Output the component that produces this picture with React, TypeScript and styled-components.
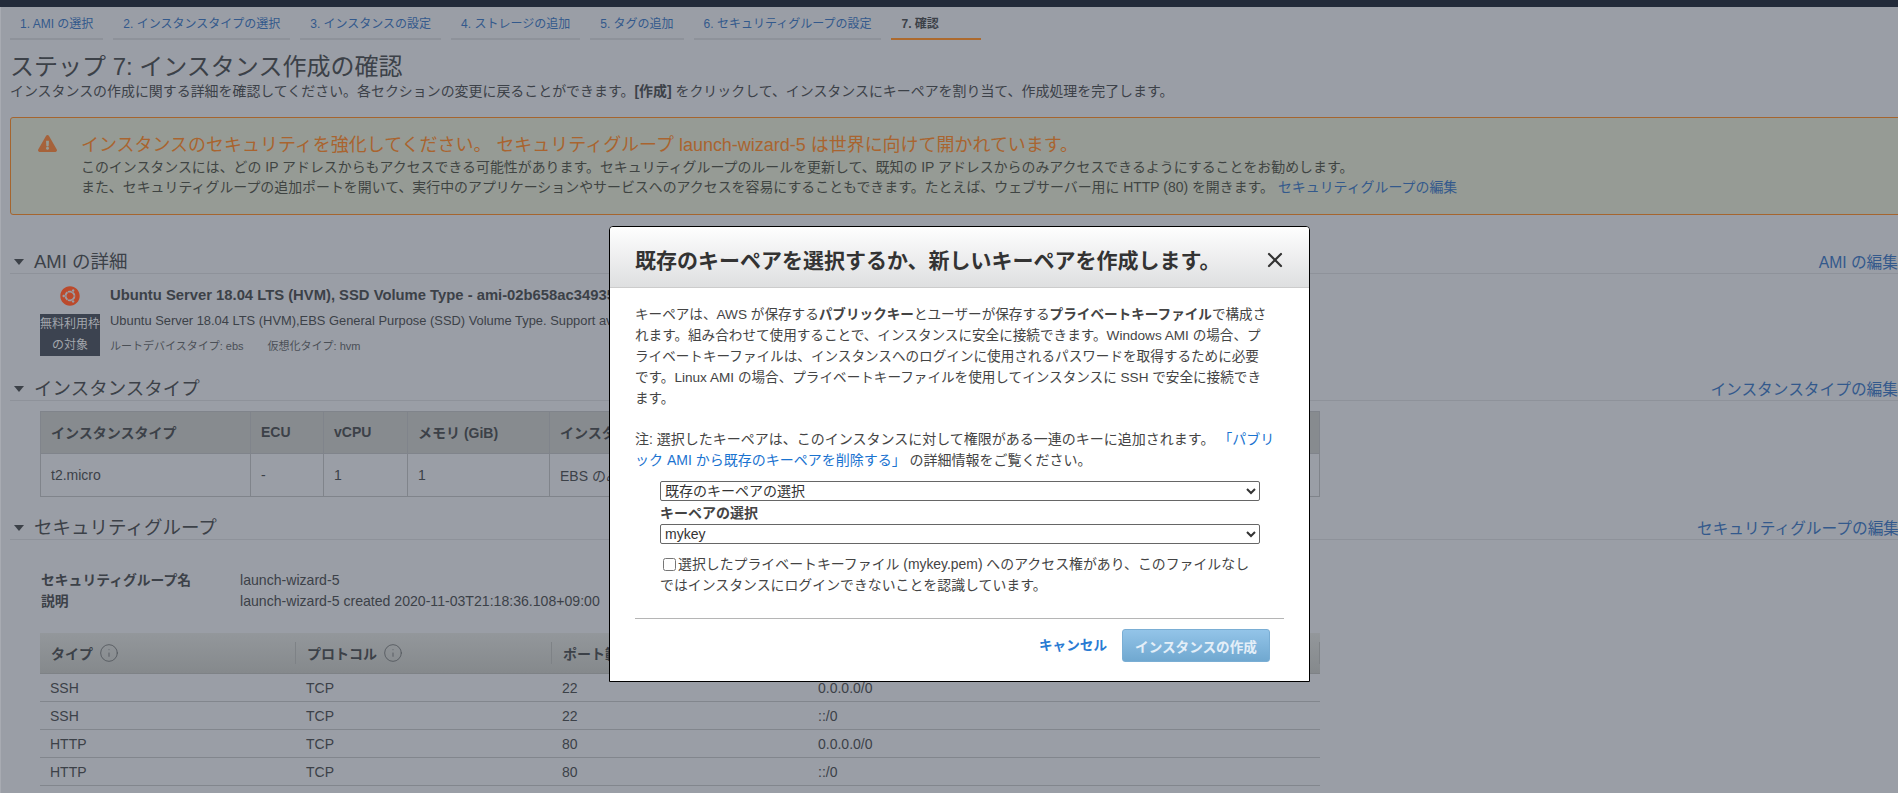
import React from "react";
import styled, { createGlobalStyle } from "styled-components";
import { FaUbuntu, FaExclamationTriangle } from "react-icons/fa";
import { Info, X } from "lucide-react";

const Global = createGlobalStyle`
  html, body { margin: 0; padding: 0; background: #9a9ea6; }
  body { font-family: "Liberation Sans", "Noto Sans CJK JP", sans-serif; color: #3c4148; }
  * { box-sizing: border-box; }
`;

const Page = styled.div`
  position: relative;
  width: 1898px;
  height: 793px;
  overflow: hidden;
  background: #9a9ea6;
  box-shadow: inset 1px 0 0 #a8abb2;
`;
const TopBar = styled.div`
  height: 7px;
  background: #232b3a;
`;
const Tabs = styled.div`
  display: flex;
  gap: 10px;
  padding-left: 10px;
`;
const Tab = styled.a<{ $active?: boolean }>`
  height: 33px;
  padding: 8px 10px 0;
  line-height: 18px;
  font-size: 12px;
  white-space: nowrap;
  color: ${(p) => (p.$active ? "#3c4148" : "#33598c")};
  font-weight: ${(p) => (p.$active ? 700 : 400)};
  border-bottom: 2px solid ${(p) => (p.$active ? "#ad6a2e" : "#8e929a")};
  ${(p) => (p.$active ? "width: 90px;" : "")}
`;
const Heading = styled.h1`
  margin: 12px 0 0 10px;
  font-size: 24px;
  line-height: 30px;
  font-weight: 400;
  color: #3c4148;
`;
const Lead = styled.p`
  margin: 0 0 0 10px;
  font-size: 13.95px;
  line-height: 18px;
  white-space: nowrap;
`;
const Alert = styled.div`
  display: flex;
  gap: 24px;
  height: 98px;
  margin: 17px -10px 0 10px;
  padding: 15px 0 0 27px;
  background: #969b95;
  border: 1px solid #a5652f;
  border-radius: 3px;
`;
const AlertIcon = styled(FaExclamationTriangle)`
  flex: none;
  width: 19px;
  height: 19px;
  margin-top: 1px;
  color: #a6623a;
`;
const AlertTitle = styled.div`
  font-size: 17.98px;
  line-height: 24px;
  color: #a9642f;
  white-space: nowrap;
`;
const AlertLine = styled.div`
  font-size: 13.93px;
  line-height: 20px;
  color: #3f4442;
  white-space: nowrap;
  &:first-of-type {
    margin-top: 1px;
  }
`;
const Link = styled.a`
  color: #33598c;
`;
const SectionHead = styled.div<{ $top: number }>`
  display: flex;
  align-items: center;
  justify-content: space-between;
  height: 24px;
  margin: ${(p) => p.$top}px 0 0 10px;
  border-bottom: 1px solid #8e929a;
`;
const SectionTitle = styled.h2`
  display: flex;
  align-items: center;
  gap: 10px;
  margin: 0 0 0 4px;
  font-size: 18.5px;
  line-height: 24px;
  font-weight: 400;
  color: #3c4148;
`;
const Caret = styled.span`
  width: 0;
  height: 0;
  border-left: 5.5px solid transparent;
  border-right: 5.5px solid transparent;
  border-top: 6px solid #3c4148;
`;
const EditLink = styled.a`
  flex: none;
  width: 201px;
  text-align: right;
  font-size: 15.7px;
  color: #33598c;
  white-space: nowrap;
`;
const AmiBody = styled.div`
  display: flex;
  gap: 10px;
  height: 103px;
  padding: 12px 0 0 40px;
`;
const AmiLogo = styled.div`
  width: 60px;
  display: flex;
  flex-direction: column;
  align-items: center;
`;
const UbuntuIcon = styled(FaUbuntu)`
  width: 20px;
  height: 20px;
  margin-bottom: 8px;
  color: #bb4a2c;
`;
const FreeBadge = styled.div`
  width: 60px;
  height: 42px;
  background: #3c4350;
  color: #a3a7ad;
  font-size: 12px;
  line-height: 21px;
  text-align: center;
  white-space: nowrap;
  overflow: hidden;
`;
const AmiTitle = styled.div`
  font-size: 14.8px;
  font-weight: 700;
  line-height: 18px;
  white-space: nowrap;
`;
const AmiDesc = styled.div`
  margin-top: 8px;
  font-size: 12.9px;
  line-height: 18px;
  white-space: nowrap;
`;
const AmiMeta = styled.div`
  display: flex;
  gap: 24px;
  margin-top: 7px;
  font-size: 11px;
  line-height: 18px;
  color: #4a4f56;
`;
const TypeTable = styled.table`
  width: 1280px;
  margin: 10px 0 0 40px;
  table-layout: fixed;
  border-collapse: collapse;
  font-size: 14px;
  th, td {
    border: 1px solid #80848b;
    padding: 0 10px;
    text-align: left;
    white-space: nowrap;
    overflow: hidden;
  }
  th {
    height: 42px;
    padding-bottom: 2px;
    background: #878b8f;
    font-weight: 700;
  }
  td {
    height: 43px;
  }
`;
const KV = styled.div`
  display: grid;
  grid-template-columns: 199px 1fr;
  margin: 30px 0 0 41px;
  line-height: 21px;
  dt {
    font-size: 13.8px;
    font-weight: 700;
  }
  dd {
    margin: 0;
    font-size: 14.1px;
  }
`;
const RuleTable = styled.div`
  width: 1280px;
  margin: 21px 0 0 40px;
  font-size: 14px;
`;
const RuleHead = styled.div`
  display: grid;
  grid-template-columns: 256px 256px 256px 1fr;
  align-items: center;
  height: 41px;
  background: linear-gradient(#93979b, #85898c);
  border-bottom: 1px solid #7e8286;
  font-weight: 700;
`;
const RuleHeadCell = styled.div`
  display: flex;
  align-items: center;
  gap: 6px;
  height: 22px;
  padding-left: 11px;
  border-right: 1px solid #7e8286;
  white-space: nowrap;
  overflow: hidden;
  svg {
    flex: none;
    color: #51565c;
  }
`;
const RuleRow = styled.div`
  display: grid;
  grid-template-columns: 256px 256px 256px 1fr;
  align-items: center;
  height: 28px;
  border-bottom: 1px solid #82868d;
`;
const RuleCell = styled.div`
  padding-left: 10px;
`;
const Modal = styled.div`
  position: absolute;
  left: 609px;
  top: 226px;
  width: 701px;
  height: 456px;
  background: #fff;
  border: 1px solid #000;
  border-radius: 4px 4px 0 0;
  overflow: hidden;
`;
const ModalHead = styled.div`
  display: flex;
  align-items: center;
  justify-content: space-between;
  height: 61px;
  padding: 4px 22px 0 25px;
  background: linear-gradient(#fefefe, #dedfe0);
  border-bottom: 1px solid #ccc;
`;
const ModalTitle = styled.h3`
  margin: 0;
  font-size: 21px;
  font-weight: 700;
  color: #333;
  white-space: nowrap;
`;
const ModalBody = styled.div`
  padding: 16px 25px 0;
  font-size: 13.6px;
  line-height: 21px;
  color: #444;
`;
const Para = styled.p`
  margin: 0 0 20px;
  white-space: nowrap;
`;
const Note = styled(Para)`
  font-size: 14px;
`;
const BlueLink = styled.a`
  color: #1a73d0;
`;
const Form = styled.div`
  margin: -10px 0 0;
  padding: 0 25px;
`;
const KeySelect = styled.select`
  display: block;
  width: 600px;
  height: 20px;
  padding: 0;
  font-size: 14px;
  font-family: inherit;
  color: #333;
  background: #fff;
  border: 1px solid #666;
  border-radius: 2px;
`;
const FieldLabel = styled.label`
  display: block;
  height: 21px;
  margin: 2px 0 0;
  font-weight: 700;
  line-height: 20px;
  font-size: 14px;
`;
const Ack = styled.label`
  display: block;
  margin-top: 10px;
  font-size: 13.9px;
  white-space: nowrap;
`;
const AckBox = styled.input`
  width: 13px;
  height: 13px;
  margin: 0 2px 0 3px;
  vertical-align: -2px;
`;
const Divider = styled.hr`
  height: 1px;
  margin: 22px 0 0;
  border: 0;
  background: #b5b5b5;
`;
const Footer = styled.div`
  display: flex;
  align-items: center;
  justify-content: flex-end;
  gap: 15px;
  padding: 10px 14px 0 0;
`;
const Cancel = styled.a`
  font-size: 13.6px;
  font-weight: 700;
  color: #2a7bd3;
`;
const PrimaryButton = styled.button`
  width: 148px;
  height: 33px;
  padding: 0;
  font-family: inherit;
  font-size: 13.6px;
  font-weight: 700;
  color: #e4eff8;
  background: linear-gradient(#93c4e8, #70a8d0);
  border: 1px solid #7aaed4;
  border-radius: 3px;
`;
const CloseButton = styled(X)`
  flex: none;
  margin-top: 1px;
  color: #333;
`;

const tabs = [
  "1. AMI の選択",
  "2. インスタンスタイプの選択",
  "3. インスタンスの設定",
  "4. ストレージの追加",
  "5. タグの追加",
  "6. セキュリティグループの設定",
];
const rules = [
  ["SSH", "TCP", "22", "0.0.0.0/0"],
  ["SSH", "TCP", "22", "::/0"],
  ["HTTP", "TCP", "80", "0.0.0.0/0"],
  ["HTTP", "TCP", "80", "::/0"],
];

export default function App() {
  return (
    <Page>
      <Global />
      <TopBar />
      <Tabs>
        {tabs.map((t) => (
          <Tab key={t}>{t}</Tab>
        ))}
        <Tab $active>7. 確認</Tab>
      </Tabs>
      <Heading>ステップ 7: インスタンス作成の確認</Heading>
      <Lead>
        インスタンスの作成に関する詳細を確認してください。各セクションの変更に戻ることができます。<b>[作成]</b> をクリックして、インスタンスにキーペアを割り当て、作成処理を完了します。
      </Lead>
      <Alert>
        <AlertIcon />
        <div>
          <AlertTitle>インスタンスのセキュリティを強化してください。 セキュリティグループ launch-wizard-5 は世界に向けて開かれています。</AlertTitle>
          <AlertLine>このインスタンスには、どの IP アドレスからもアクセスできる可能性があります。セキュリティグループのルールを更新して、既知の IP アドレスからのみアクセスできるようにすることをお勧めします。</AlertLine>
          <AlertLine>
            また、セキュリティグループの追加ポートを開いて、実行中のアプリケーションやサービスへのアクセスを容易にすることもできます。たとえば、ウェブサーバー用に HTTP (80) を開きます。 <Link>セキュリティグループの編集</Link>
          </AlertLine>
        </div>
      </Alert>

      <SectionHead $top={35}>
        <SectionTitle><Caret />AMI の詳細</SectionTitle>
        <EditLink>AMI の編集</EditLink>
      </SectionHead>
      <AmiBody>
        <AmiLogo>
          <UbuntuIcon />
          <FreeBadge>無料利用枠<br />の対象</FreeBadge>
        </AmiLogo>
        <div>
          <AmiTitle>Ubuntu Server 18.04 LTS (HVM), SSD Volume Type - ami-02b658ac34935766f</AmiTitle>
          <AmiDesc>Ubuntu Server 18.04 LTS (HVM),EBS General Purpose (SSD) Volume Type. Support available from Canonical</AmiDesc>
          <AmiMeta><span>ルートデバイスタイプ: ebs</span><span>仮想化タイプ: hvm</span></AmiMeta>
        </div>
      </AmiBody>

      <SectionHead $top={0}>
        <SectionTitle><Caret />インスタンスタイプ</SectionTitle>
        <EditLink>インスタンスタイプの編集</EditLink>
      </SectionHead>
      <TypeTable>
        <colgroup>
          <col width="210" /><col width="73" /><col width="84" /><col width="142" /><col width="260" /><col width="260" /><col />
        </colgroup>
        <thead>
          <tr><th>インスタンスタイプ</th><th>ECU</th><th>vCPU</th><th>メモリ (GiB)</th><th>インスタンスストレージ (GB)</th><th>EBS 最適化利用</th><th>ネットワークパフォーマンス</th></tr>
        </thead>
        <tbody>
          <tr><td>t2.micro</td><td>-</td><td>1</td><td>1</td><td>EBS のみ</td><td>-</td><td>低から中</td></tr>
        </tbody>
      </TypeTable>

      <SectionHead $top={19}>
        <SectionTitle><Caret />セキュリティグループ</SectionTitle>
        <EditLink>セキュリティグループの編集</EditLink>
      </SectionHead>
      <KV as="dl">
        <dt>セキュリティグループ名</dt><dd>launch-wizard-5</dd>
        <dt>説明</dt><dd>launch-wizard-5 created 2020-11-03T21:18:36.108+09:00</dd>
      </KV>
      <RuleTable>
        <RuleHead>
          <RuleHeadCell>タイプ <Info size={20} strokeWidth={1} /></RuleHeadCell>
          <RuleHeadCell>プロトコル <Info size={20} strokeWidth={1} /></RuleHeadCell>
          <RuleHeadCell>ポート範囲 <Info size={20} strokeWidth={1} /></RuleHeadCell>
          <RuleHeadCell>ソース <Info size={20} strokeWidth={1} /></RuleHeadCell>
        </RuleHead>
        {rules.map((r, i) => (
          <RuleRow key={i}>
            {r.map((c, j) => (
              <RuleCell key={j}>{c}</RuleCell>
            ))}
          </RuleRow>
        ))}
      </RuleTable>

      <Modal>
        <ModalHead>
          <ModalTitle>既存のキーペアを選択するか、新しいキーペアを作成します。</ModalTitle>
          <CloseButton size={24} strokeWidth={2.2} />
        </ModalHead>
        <ModalBody>
          <Para>
            キーペアは、AWS が保存する<b>パブリックキー</b>とユーザーが保存する<b>プライベートキーファイル</b>で構成さ<br />
            れます。組み合わせて使用することで、インスタンスに安全に接続できます。Windows AMI の場合、プ<br />
            ライベートキーファイルは、インスタンスへのログインに使用されるパスワードを取得するために必要<br />
            です。Linux AMI の場合、プライベートキーファイルを使用してインスタンスに SSH で安全に接続でき<br />
            ます。
          </Para>
          <Note>
            注: 選択したキーペアは、このインスタンスに対して権限がある一連のキーに追加されます。 <BlueLink>「パブリ<br />
            ック AMI から既存のキーペアを削除する」</BlueLink> の詳細情報をご覧ください。
          </Note>
          <Form>
            <KeySelect defaultValue="a">
              <option value="a">既存のキーペアの選択</option>
            </KeySelect>
            <FieldLabel>キーペアの選択</FieldLabel>
            <KeySelect defaultValue="mykey">
              <option value="mykey">mykey</option>
            </KeySelect>
            <Ack>
              <AckBox type="checkbox" />選択したプライベートキーファイル (mykey.pem) へのアクセス権があり、このファイルなし<br />
              ではインスタンスにログインできないことを認識しています。
            </Ack>
          </Form>
          <Divider />
          <Footer>
            <Cancel>キャンセル</Cancel>
            <PrimaryButton>インスタンスの作成</PrimaryButton>
          </Footer>
        </ModalBody>
      </Modal>
    </Page>
  );
}
